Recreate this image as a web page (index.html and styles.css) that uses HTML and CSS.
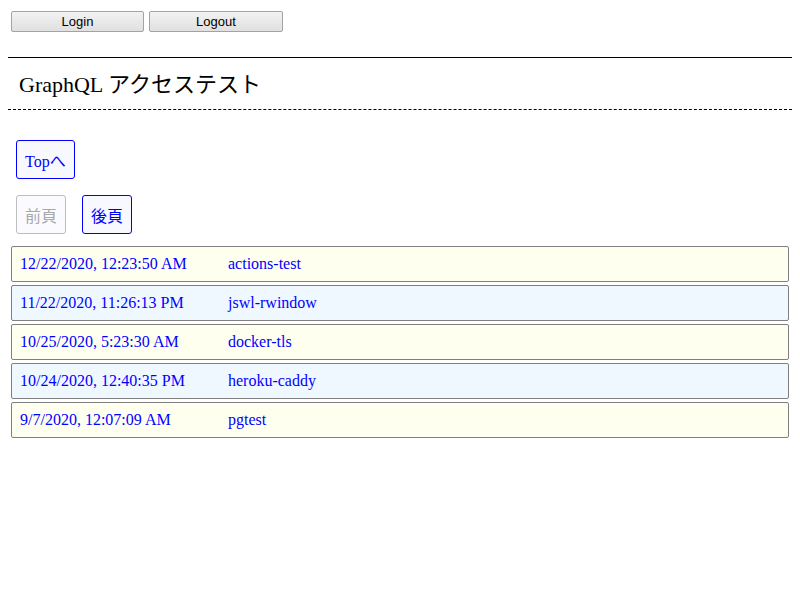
FILE: index.html
```html
<!DOCTYPE html>
<html lang="ja">
<head>
<meta charset="utf-8">
<title>GraphQL アクセステスト</title>
<link rel="stylesheet" href="styles.css">
</head>
<body>
<div class="auth">
  <button class="auth-btn">Login</button>
  <button class="auth-btn">Logout</button>
</div>
<header class="title-box">
  <h1 class="title">GraphQL アクセステスト</h1>
</header>
<main class="content">
  <div class="top-row">
    <button class="nav-btn serif">Topへ</button>
  </div>
  <div class="pager">
    <button class="nav-btn sans" disabled>前頁</button>
    <button class="nav-btn sans">後頁</button>
  </div>
  <ul class="list">
    <li class="item odd"><span class="date">12/22/2020, 12:23:50 AM</span><span class="name">actions-test</span></li>
    <li class="item even"><span class="date">11/22/2020, 11:26:13 PM</span><span class="name">jswl-rwindow</span></li>
    <li class="item odd"><span class="date">10/25/2020, 5:23:30 AM</span><span class="name">docker-tls</span></li>
    <li class="item even"><span class="date">10/24/2020, 12:40:35 PM</span><span class="name">heroku-caddy</span></li>
    <li class="item odd"><span class="date">9/7/2020, 12:07:09 AM</span><span class="name">pgtest</span></li>
  </ul>
</main>
</body>
</html>
```
FILE: styles.css
```css
html, body {
  margin: 0;
  padding: 0;
  background: #ffffff;
}
body {
  margin: 8px;
  font-family: "Liberation Serif", "Noto Sans CJK JP", serif;
  font-size: 16px;
  color: #000;
}
.auth {
  display: flex;
  gap: 5px;
  padding: 3px 0 0 3px;
  height: 21px;
}
.auth-btn {
  box-sizing: border-box;
  width: 133px;
  height: 21px;
  padding: 0;
  margin: 0;
  font-family: "Liberation Sans", Arial, sans-serif;
  font-size: 13px;
  color: #000;
  background: linear-gradient(#f2f2f2, #e0e0e0);
  border: 1px solid #a3a3a3;
  border-radius: 2px;
}
.auth-btn + .auth-btn {
  width: 134px;
}
.title-box {
  margin-top: 25px;
  border-top: 1px solid #000;
  border-bottom: 1px dashed #000;
  height: 51px;
  display: flex;
  align-items: center;
}
.title {
  margin: 0;
  padding: 3px 0 0 11px;
  font-size: 22px;
  font-weight: normal;
  line-height: 26px;
  font-family: "Liberation Serif", "Noto Sans CJK JP", serif;
}
.content {
  padding-top: 30px;
}
.top-row {
  display: flex;
  padding-left: 8px;
}
.pager {
  display: flex;
  gap: 16px;
  padding-left: 8px;
  margin-top: 16px;
}
.nav-btn {
  box-sizing: border-box;
  height: 39px;
  margin: 0;
  padding: 0 8px;
  font-size: 16px;
  color: #0000ff;
  background: #f8f8ff;
  border: 1px solid #0000ff;
  border-radius: 3px;
}
.nav-btn.serif {
  font-family: "Liberation Serif", "Noto Sans CJK JP", serif;
}
.nav-btn.sans {
  font-family: "Noto Sans CJK JP", sans-serif;
}
.nav-btn:disabled {
  color: #a8a8a8;
  border-color: #bdbdbd;
  background: #fbfbff;
}
.list {
  list-style: none;
  margin: 12px 0 0 0;
  padding: 0 3px;
  display: flex;
  flex-direction: column;
  gap: 3px;
}
.item {
  display: flex;
  border: 1px solid #808080;
  border-radius: 2px;
  padding: 8px 8px;
  line-height: 18px;
  color: #0000ff;
}
.item.odd {
  background: #fffff0;
}
.item.even {
  background: #f0f8ff;
}
.date {
  width: 208px;
  flex: none;
}
```
